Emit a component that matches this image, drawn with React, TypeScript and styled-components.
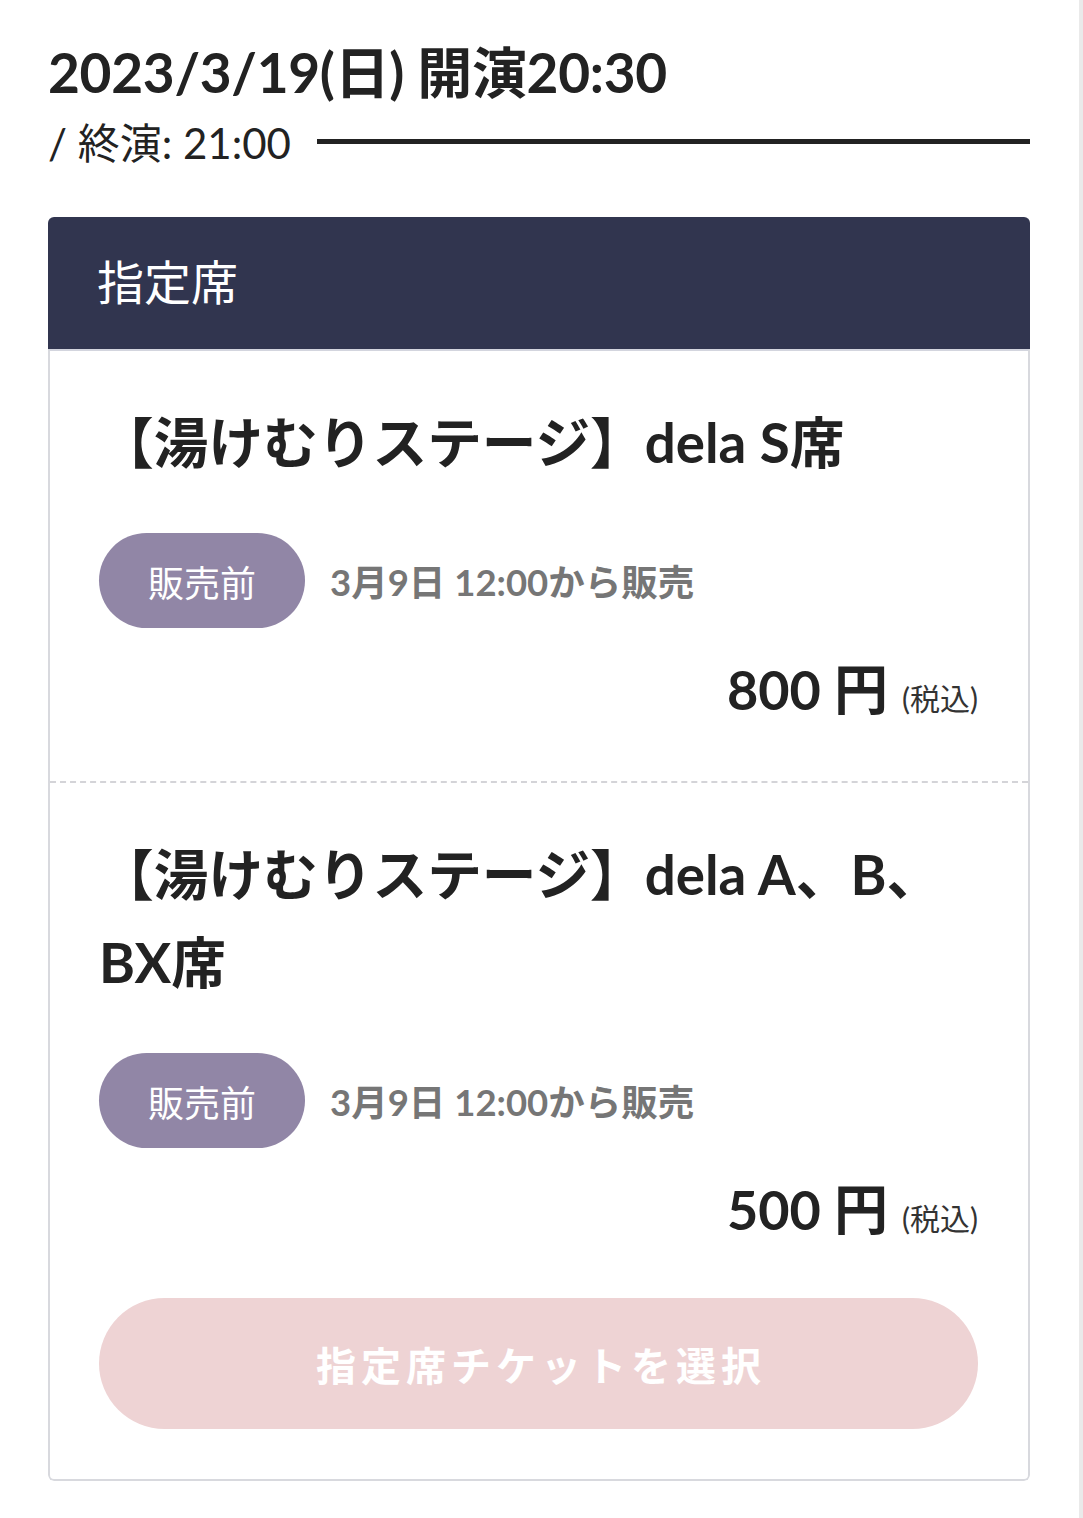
import React from "react";
import styled, { createGlobalStyle } from "styled-components";

const Global = createGlobalStyle`
  html, body { margin: 0; padding: 0; background: #ffffff; }
  body {
    font-family: Lato, "Noto Sans CJK JP", sans-serif;
    color: #222222;
    -webkit-font-smoothing: antialiased;
  }
  * { box-sizing: border-box; }
`;

const Page = styled.div`
  min-height: 1518px;
  padding: 37px 49px 37px 48px;
  border-right: 4px solid #eaeaea;
`;

const DateTitle = styled.h1`
  margin: 0;
  font-size: 55px;
  line-height: 70px;
  font-weight: 700;
  letter-spacing: -0.3px;
`;

const EndRow = styled.div`
  display: flex;
  align-items: center;
  gap: 26px;
  height: 66px;
`;

const EndText = styled.span`
  font-size: 42px;
  font-weight: 400;
  white-space: nowrap;
`;

const Rule = styled.div`
  flex: 1;
  height: 5px;
  background: #222222;
  margin-top: 2px;
`;

const Card = styled.section`
  margin-top: 44px;
  border-radius: 6px;
  overflow: hidden;
`;

const CardHeader = styled.div`
  background: #31354f;
  color: #ffffff;
  height: 132px;
  display: flex;
  align-items: center;
  padding-left: 49px;
  padding-bottom: 8px;
  font-size: 47px;
  font-weight: 400;
`;

const CardBody = styled.div`
  border: 2px solid #d8d9de;
  border-top-color: #d3d5de;
  border-radius: 0 0 6px 6px;
`;

const Ticket = styled.div<{ $divider?: boolean }>`
  padding: 47px 50px ${(p) => (p.$divider ? "51px" : "48px")} 49px;
  border-bottom: ${(p) => (p.$divider ? "2px dashed #d4d4d8" : "none")};
`;

const TicketName = styled.h2`
  margin: 0;
  font-size: 54.7px;
  line-height: 88px;
  font-weight: 700;
`;

const StatusRow = styled.div`
  display: flex;
  align-items: center;
  gap: 25px;
  margin-top: 47px;
`;

const Badge = styled.span`
  display: inline-flex;
  align-items: center;
  justify-content: center;
  width: 206px;
  height: 95px;
  border-radius: 48px;
  background: #9186a6;
  color: #ffffff;
  font-size: 36px;
  font-weight: 400;
`;

const SaleText = styled.span`
  font-size: 36.5px;
  font-weight: 700;
  color: #767676;
`;

const PriceRow = styled.div`
  display: flex;
  justify-content: flex-end;
  align-items: baseline;
  gap: 14px;
  margin-top: 30px;
  line-height: 64px;
`;

const Price = styled.span`
  font-size: 54px;
  font-weight: 700;
  color: #222222;
`;

const Tax = styled.span`
  font-size: 30px;
  font-weight: 400;
  color: #333333;
`;

const Footer = styled.div`
  padding: 0 50px 50px 49px;
`;

const SelectButton = styled.button`
  display: flex;
  align-items: center;
  justify-content: center;
  width: 100%;
  height: 131px;
  border: none;
  border-radius: 66px;
  background: #eed3d4;
  color: #ffffff;
  font-family: Lato, "Noto Sans CJK JP", sans-serif;
  font-size: 40px;
  font-weight: 700;
  letter-spacing: 5px;
  padding: 0 0 0 5px;
  cursor: default;
`;

type TicketData = { name: string; sale: string; price: string };

const tickets: TicketData[] = [
  { name: "【湯けむりステージ】dela S席", sale: "3月9日 12:00から販売", price: "800" },
  { name: "【湯けむりステージ】dela A、B、BX席", sale: "3月9日 12:00から販売", price: "500" },
];

export default function App() {
  return (
    <>
      <Global />
      <Page>
        <DateTitle>2023/3/19(日) 開演20:30</DateTitle>
        <EndRow>
          <EndText>/ 終演: 21:00</EndText>
          <Rule />
        </EndRow>
        <Card>
          <CardHeader>指定席</CardHeader>
          <CardBody>
            {tickets.map((t, i) => (
              <Ticket key={i} $divider={i < tickets.length - 1}>
                <TicketName>{t.name}</TicketName>
                <StatusRow>
                  <Badge>販売前</Badge>
                  <SaleText>{t.sale}</SaleText>
                </StatusRow>
                <PriceRow>
                  <Price>{t.price} 円</Price>
                  <Tax>(税込)</Tax>
                </PriceRow>
              </Ticket>
            ))}
            <Footer>
              <SelectButton type="button">指定席チケットを選択</SelectButton>
            </Footer>
          </CardBody>
        </Card>
      </Page>
    </>
  );
}
